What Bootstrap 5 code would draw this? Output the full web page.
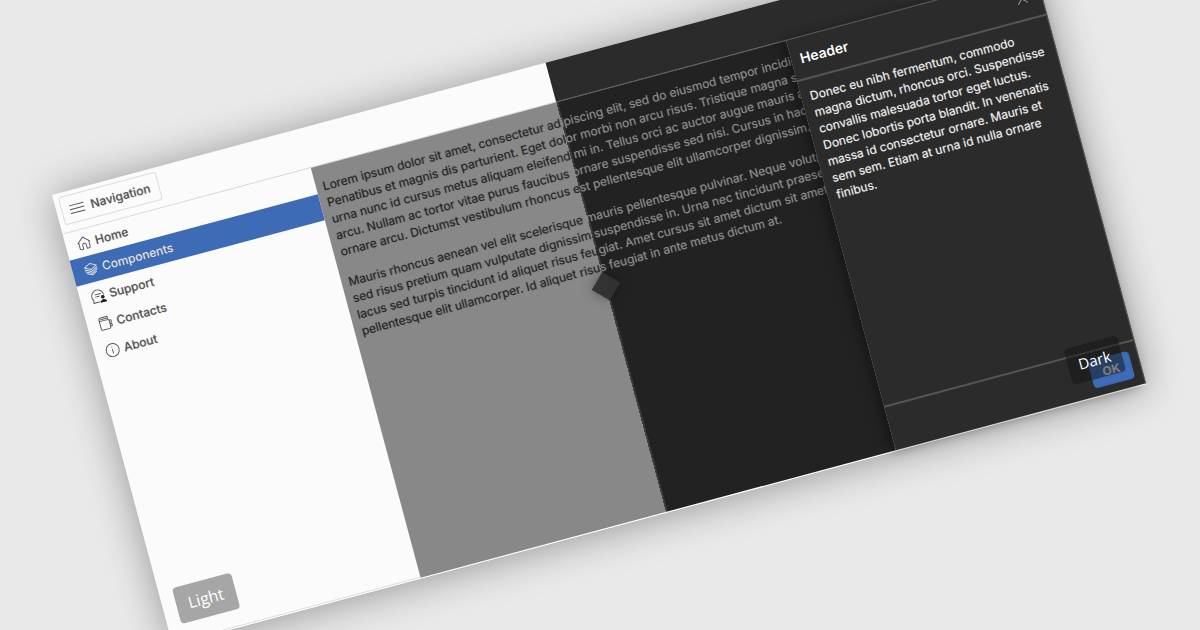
<!DOCTYPE html>
<html lang="en">
<head>
<meta charset="utf-8">
<meta name="viewport" content="width=device-width, initial-scale=1">
<title>Navigation drawer – light and dark themes</title>
<link href="https://cdn.jsdelivr.net/npm/bootstrap@5.3.0/dist/css/bootstrap.min.css" rel="stylesheet">
<style>
  :root { --split: 511px; --nav: 257px; --drawer: 259px; --accent: #3d6bb5; --ink: #555; --surface: #2b2b2b; --rule: #555; }
  body { background: #e9e9e9; font-family: Inter, "Liberation Sans", sans-serif; font-size: 12px; line-height: 17px; }
  .stage { padding: 195px 0 0 52px; }
  .app { width: 84vw; min-height: 466px; background: #fbfbfb; border-bottom: 1px solid #fff; transform: rotate(-15deg); transform-origin: 0 0; box-shadow: 0 2px 40px rgba(0,0,0,.36); }
  .bar-light { flex: 0 0 var(--split); height: 41px; padding: 4px 5px; border-bottom: 1px solid #d6d6d6; }
  .bar-dark { background: var(--surface); border-bottom: 1px solid #707070; }
  .btn-menu { --bs-btn-padding-x: 7px; --bs-btn-padding-y: 5px; --bs-btn-font-size: 12px; --bs-btn-border-color: #ddd; --bs-btn-color: var(--ink); --bs-btn-font-weight: 500; --bs-btn-border-radius: 3px; line-height: 17px; height: 29px; width: 101px; gap: 6px; white-space: nowrap; }
  .side { flex: 0 0 var(--nav); border-bottom: 1px solid #dedede; }
  .side a { color: var(--ink); font-weight: 500; height: 28px; padding: 0 11px; gap: 4px; }
  .side a:nth-child(-n+2) { height: 27px; }
  .side a.active { background: var(--accent); color: #e4e4e4; }
  .side a, .btn-menu { text-shadow: 0 0 1px rgba(90,90,90,.4); }
  .side svg, .btn-menu svg { flex: none; fill: none; stroke: currentColor; stroke-width: 1; stroke-linecap: round; stroke-linejoin: round; }
  .content-pane { min-width: 0; padding: 12px 7px; color: #262626; white-space: nowrap; text-shadow: 0 0 1px rgba(38,38,38,.5);
    background: linear-gradient(90deg, #888 calc(var(--split) - var(--nav)), #444 0, #333 calc(var(--split) - var(--nav) + 2px), #222 0); }
  .content-pane p { margin-bottom: 14px; }
  .on-dark { color: #8c8c8c; text-shadow: 0 0 1px rgba(140,140,140,.5); }
  .drawer { flex: 0 0 var(--drawer); background: var(--surface); color: #eee; box-shadow: -5px 0 12px rgba(0,0,0,.35); border-right: 1px solid #555; }
  .drawer p { padding: 8px 9px 0; text-shadow: 0 0 1px rgba(238,238,238,.5); }
  .drawer-head { height: 43px; padding: 0 14px 0 9px; border-bottom: 2px solid var(--rule); }
  .drawer-head h2 { font-size: 14px; line-height: 20px; font-weight: 600; color: #fff; }
  .btn-x { width: 11px; height: 11px; }
  .drawer-foot { height: 46px; padding: 8px; border-top: 2px solid var(--rule); }
  .btn-ok { --bs-btn-bg: var(--accent); --bs-btn-color: #e4e4e4; --bs-btn-font-size: 12px; --bs-btn-font-weight: 700; --bs-btn-padding-x: 0; --bs-btn-padding-y: 0; --bs-btn-border-radius: 4px; --bs-btn-border-color: var(--accent); width: 42px; height: 28px; }
  .tag { bottom: 17px; height: 37px; padding: 7px 12px; border-radius: 4px; color: #fff; font: 16px/23px "Open Sans", sans-serif; }
  .tag-light { left: 14px; background: #a6a6a6; }
  .tag-dark { right: 16px; padding: 7px 11px; font-size: 15px; background: rgba(20,20,20,.5); }
  .grip { left: calc(var(--split) - 10px); top: 221px; width: 21px; height: 21px; transform: rotate(45deg); background: linear-gradient(45deg, #353535, #2f2f2f); box-shadow: 0 0 12px rgba(0,0,0,.35); }
</style>
</head>
<body class="vh-100 overflow-hidden">
<div class="stage">
  <div class="app position-relative d-flex flex-column">
    <header class="d-flex">
      <div class="bar-light">
        <button type="button" class="btn btn-menu d-flex align-items-center">
          <svg width="16" height="16" viewBox="0 0 16 16" aria-hidden="true"><path d="M1 4h14M1 8h14M1 12h14"/></svg>Navigation
        </button>
      </div>
      <div class="bar-dark flex-grow-1"></div>
    </header>

    <div class="d-flex flex-grow-1">
      <nav class="side d-flex flex-column">
        <a href="#" class="d-flex align-items-center text-decoration-none">
          <svg width="15" height="15" viewBox="0 0 16 16" aria-hidden="true"><path d="M1.500 7.500 8 1.500l6.500 6M2.500 6.800V13.500a1 1 0 0 0 1 1H6V10.500a2 2 0 0 1 4 0v4h2.500a1 1 0 0 0 1-1V6.800"/></svg>Home</a>
        <a href="#" class="active d-flex align-items-center text-decoration-none" aria-current="page">
          <svg width="15" height="15" viewBox="0 0 16 16" aria-hidden="true"><path d="M8 2 14.500 5.300 8 8.600 1.500 5.300zM1.500 7.500 8 10.800l6.500-3.300M1.500 9.500 8 12.800l6.500-3.300M3 12l5 2.600 5-2.600"/></svg>Components</a>
        <a href="#" class="d-flex align-items-center text-decoration-none">
          <svg width="15" height="15" viewBox="0 0 16 16" aria-hidden="true"><path d="M8.500 14.500H1.500l.8-2.700A6.500 6.500 0 1 1 14 7.500M5 6h6M5 8.500h4"/><circle cx="12.500" cy="10" r="1.900" fill="#222" stroke="none"/><path d="M9 16c0-4.500 7-4.500 7 0z" fill="#222" stroke="none"/></svg>Support</a>
        <a href="#" class="d-flex align-items-center text-decoration-none">
          <svg width="15" height="15" viewBox="0 0 16 16" aria-hidden="true"><path d="M2 3.500A2 2 0 0 1 3.500 1.500H11.500v2.500M2 3.500A1.500 1.500 0 0 0 3.500 5H11a1.500 1.500 0 0 1 1.500 1.500v7a1.300 1.300 0 0 1-1.300 1.300H3.300A1.300 1.300 0 0 1 2 13.500zM4 3.300h7.500M12.500 6h2v2.500h-2M12.500 10h2v2.500h-2"/></svg>Contacts</a>
        <a href="#" class="d-flex align-items-center text-decoration-none">
          <svg width="15" height="15" viewBox="0 0 16 16" aria-hidden="true"><circle cx="8" cy="8" r="7"/><path d="M8 7.200v4.300M8 4.600v.2"/></svg>About</a>
      </nav>

      <main class="content-pane flex-grow-1 overflow-hidden">
        <p>Lorem ipsum dolor sit amet, consectetur ad<span class="on-dark">ipiscing elit, sed do eiusmod tempor incididunt</span><br>
        Penatibus et magnis dis parturient. Eget dol<span class="on-dark">or morbi non arcu risus. Tristique magna sit</span><br>
        urna nunc id cursus metus aliquam eleifend <span class="on-dark">mi in. Tellus orci ac auctor augue mauris augue</span><br>
        arcu. Nullam ac tortor vitae purus faucibus <span class="on-dark">ornare suspendisse sed nisi. Cursus in hac h</span><br>
        ornare arcu. Dictumst vestibulum rhoncus e<span class="on-dark">st pellentesque elit ullamcorper dignissim.</span></p>
        <p>Mauris rhoncus aenean vel elit scelerisque <span class="on-dark">mauris pellentesque pulvinar. Neque volutpat</span><br>
        sed risus pretium quam vulputate dignissim <span class="on-dark">suspendisse in. Urna nec tincidunt praesent</span><br>
        lacus sed turpis tincidunt id aliquet risus feu<span class="on-dark">giat. Amet cursus sit amet dictum sit amet</span><br>
        pellentesque elit ullamcorper. Id aliquet risu<span class="on-dark">s feugiat in ante metus dictum at.</span></p>
      </main>

      <aside class="drawer d-flex flex-column">
        <div class="drawer-head d-flex align-items-center justify-content-between">
          <h2 class="m-0">Header</h2>
          <button type="button" class="btn-x border-0 p-0 bg-transparent d-flex" aria-label="Close">
            <svg width="11" height="11" viewBox="0 0 11 11" stroke="#999" aria-hidden="true"><path d="m.5.5 10 10M10.500.5l-10 10"/></svg>
          </button>
        </div>
        <p class="m-0 flex-grow-1 text-nowrap">Donec eu nibh fermentum, commodo<br>magna dictum, rhoncus orci. Suspendisse<br>convallis malesuada tortor eget luctus.<br>Donec lobortis porta blandit. In venenatis<br>massa id consectetur ornare. Mauris et<br>sem sem. Etiam at urna id nulla ornare<br>finibus.</p>
        <div class="drawer-foot d-flex justify-content-end">
          <button type="button" class="btn btn-ok">OK</button>
        </div>
      </aside>
    </div>

    <button type="button" class="grip position-absolute border-0 p-0" aria-label="Compare themes"></button>
    <span class="tag tag-light position-absolute">Light</span>
    <span class="tag tag-dark position-absolute">Dark</span>
  </div>
</div>
<script src="https://cdn.jsdelivr.net/npm/bootstrap@5.3.0/dist/js/bootstrap.bundle.min.js"></script>
</body>
</html>
